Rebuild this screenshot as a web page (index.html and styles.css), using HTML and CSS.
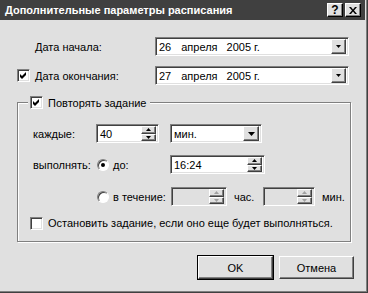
FILE: index.html
```html
<!DOCTYPE html>
<html lang="ru">
<head>
    <meta charset="UTF-8">
    <title>Дополнительные параметры расписания</title>
    <link rel="stylesheet" href="styles.css">
</head>
<body>
<div class="window">
    <div class="titlebar">
        <span class="title">Дополнительные параметры расписания</span>
        <span class="tb-btn tb-help">?</span>
        <span class="tb-btn tb-close">
            <svg width="8" height="7" viewBox="0 0 8 7"><path d="M0 0h2l2 2.4L6 0h2L5 3.5 8 7H6L4 4.6 2 7H0l3-3.5z"/></svg>
        </span>
    </div>

    <div class="dialog">
        <div class="row date-row">
            <span class="check-slot"></span>
            <span class="label">Дата начала:</span>
            <div class="field date-field">
                <span class="date-text"><span>26</span><span class="month">апреля</span><span class="year">2005 г.</span></span>
                <span class="btn drop-btn"><svg width="5" height="3" viewBox="0 0 5 3"><path d="M0 0h5L2.5 3z"/></svg></span>
            </div>
        </div>

        <div class="row date-row second">
            <span class="check-slot"><span class="checkbox checked"><svg width="7" height="7" viewBox="0 0 7 7"><path d="M0 2l2 2 4-4v3L2 7 0 5z"/></svg></span></span>
            <span class="label">Дата окончания:</span>
            <div class="field date-field">
                <span class="date-text"><span>27</span><span class="month">апреля</span><span class="year">2005 г.</span></span>
                <span class="btn drop-btn"><svg width="5" height="3" viewBox="0 0 5 3"><path d="M0 0h5L2.5 3z"/></svg></span>
            </div>
        </div>

        <fieldset class="group">
            <legend>
                <span class="checkbox checked"><svg width="7" height="7" viewBox="0 0 7 7"><path d="M0 2l2 2 4-4v3L2 7 0 5z"/></svg></span>
                <span>Повторять задание</span>
            </legend>

            <div class="grow every-row">
                <span class="glabel">каждые:</span>
                <div class="field spin spin-count">
                    <span class="value">40</span>
                    <span class="spin-btns">
                        <span class="btn"><svg width="5" height="3" viewBox="0 0 5 3"><path d="M2.5 0L5 3H0z"/></svg></span>
                        <span class="btn"><svg width="5" height="3" viewBox="0 0 5 3"><path d="M0 0h5L2.5 3z"/></svg></span>
                    </span>
                </div>
                <div class="field unit-select">
                    <span class="value">мин.</span>
                    <span class="btn drop-btn big"><svg width="7" height="4" viewBox="0 0 7 4"><path d="M0 0h7L3.5 4z"/></svg></span>
                </div>
            </div>

            <div class="grow exec-row">
                <span class="glabel wide">выполнять:</span>
                <span class="radio-slot"><span class="radio on"></span></span>
                <span class="opt until">до:</span>
                <div class="field spin spin-time">
                    <span class="value">16:24</span>
                    <span class="spin-btns">
                        <span class="btn"><svg width="5" height="3" viewBox="0 0 5 3"><path d="M2.5 0L5 3H0z"/></svg></span>
                        <span class="btn"><svg width="5" height="3" viewBox="0 0 5 3"><path d="M0 0h5L2.5 3z"/></svg></span>
                    </span>
                </div>
            </div>

            <div class="grow during-row">
                <span class="glabel wide"></span>
                <span class="radio-slot"><span class="radio"></span></span>
                <span class="opt during">в течение:</span>
                <div class="field spin disabled spin-hours">
                    <span class="value"></span>
                    <span class="spin-btns">
                        <span class="btn"><svg width="5" height="3" viewBox="0 0 5 3"><path d="M2.5 0L5 3H0z"/></svg></span>
                        <span class="btn"><svg width="5" height="3" viewBox="0 0 5 3"><path d="M0 0h5L2.5 3z"/></svg></span>
                    </span>
                </div>
                <span class="unit hours">час.</span>
                <div class="field spin disabled spin-mins">
                    <span class="value"></span>
                    <span class="spin-btns">
                        <span class="btn"><svg width="5" height="3" viewBox="0 0 5 3"><path d="M2.5 0L5 3H0z"/></svg></span>
                        <span class="btn"><svg width="5" height="3" viewBox="0 0 5 3"><path d="M0 0h5L2.5 3z"/></svg></span>
                    </span>
                </div>
                <span class="unit">мин.</span>
            </div>

            <div class="grow stop-row">
                <span class="checkbox"></span>
                <span>Остановить задание, если оно еще будет выполняться.</span>
            </div>
        </fieldset>

        <div class="buttons">
            <span class="push default">OK</span>
            <span class="push">Отмена</span>
        </div>
    </div>
</div>
</body>
</html>
```

FILE: styles.css
```css
body {
    margin: 0;
    background: #e0e0e0;
}

.window {
    width: 368px;
    height: 293px;
    box-sizing: border-box;
    background: #e0e0e0;
    border-right: 1px solid #404040;
    border-bottom: 1px solid #404040;
    box-shadow: inset -1px -1px 0 #808080;
    font-family: "Liberation Sans", Arial, sans-serif;
    font-size: 11px;
    color: #000;
    overflow: hidden;
}

/* заголовок окна */
.titlebar {
    display: flex;
    align-items: center;
    height: 20px;
    margin-right: 2px;
    background: #404040;
    padding-right: 4px;
}

.title {
    flex: 1;
    padding-left: 5px;
    color: #fff;
    font-weight: bold;
    font-size: 11px;
    white-space: nowrap;
}

.tb-btn {
    width: 16px;
    height: 14px;
    box-sizing: border-box;
    display: flex;
    align-items: center;
    justify-content: center;
    background: #e0e0e0;
    border-top: 1px solid #fff;
    border-left: 1px solid #fff;
    border-right: 1px solid #000;
    border-bottom: 1px solid #000;
    box-shadow: inset -1px -1px 0 #808080;
    font-weight: bold;
    font-size: 12px;
    line-height: 12px;
}

.tb-close {
    margin-left: 2px;
}

/* содержимое */
.dialog {
    padding: 17px 13px 0 17px;
}

.row {
    display: flex;
    align-items: center;
    height: 19px;
}

.date-row.second {
    margin-top: 10px;
}

.check-slot {
    width: 18px;
    display: flex;
    align-items: center;
}

.label {
    width: 120px;
}

/* поля ввода */
.field {
    display: flex;
    align-items: center;
    box-sizing: border-box;
    height: 19px;
    background: #fff;
    border: 1px solid;
    border-color: #808080 #fff #fff #808080;
    box-shadow: inset 1px 1px 0 #404040, inset -1px -1px 0 #e0e0e0;
    padding: 2px 2px 2px 3px;
}

.field .value,
.date-text {
    flex: 1;
    white-space: nowrap;
}

.date-field {
    width: 194px;
}

.date-text .month {
    margin-left: 10px;
}

.date-text .year {
    margin-left: 9px;
}

.btn {
    display: flex;
    align-items: center;
    justify-content: center;
    box-sizing: border-box;
    background: #e0e0e0;
    border-top: 1px solid #fff;
    border-left: 1px solid #fff;
    border-right: 1px solid #404040;
    border-bottom: 1px solid #404040;
    box-shadow: inset -1px -1px 0 #808080;
}

.btn svg {
    fill: #000;
}

.drop-btn {
    width: 15px;
    height: 15px;
}

.drop-btn.big {
    width: 16px;
}

.spin {
    padding-right: 2px;
}

.spin-btns {
    display: flex;
    flex-direction: column;
    width: 15px;
    height: 15px;
}

.spin-btns .btn {
    flex: 1;
}

.disabled {
    background: #e0e0e0;
}

.disabled .btn svg {
    fill: #a0a0a0;
}

/* флажки и переключатели */
.checkbox {
    width: 13px;
    height: 13px;
    box-sizing: border-box;
    display: inline-flex;
    align-items: center;
    justify-content: center;
    background: #fff;
    border: 1px solid;
    border-color: #808080 #fff #fff #808080;
    box-shadow: inset 1px 1px 0 #404040, inset -1px -1px 0 #e0e0e0;
}

.radio-slot {
    width: 16px;
    display: flex;
    align-items: center;
}

.radio {
    width: 12px;
    height: 12px;
    box-sizing: border-box;
    display: flex;
    align-items: center;
    justify-content: center;
    border-radius: 50%;
    background: #fff;
    border: 1px solid;
    border-color: #808080 #fff #fff #808080;
    box-shadow: inset 1px 1px 0 #404040;
}

.radio.on::after {
    content: "";
    width: 4px;
    height: 4px;
    border-radius: 50%;
    background: #000;
}

/* группа повторения */
.group {
    box-sizing: border-box;
    width: 334px;
    margin: 11px 0 0 0;
    padding: 0 0 11px 0;
    border: 1px solid #808080;
    box-shadow: 1px 1px 0 #fff, inset 1px 1px 0 #fff;
}

.group legend {
    display: flex;
    align-items: center;
    gap: 5px;
    height: 13px;
    margin-left: 10px;
    padding: 0 4px 0 2px;
    background: #e0e0e0;
}

.grow {
    display: flex;
    align-items: center;
    height: 19px;
    padding-left: 15px;
}

.every-row {
    margin-top: 15px;
}

.exec-row {
    margin-top: 12px;
}

.during-row {
    margin-top: 13px;
}

.stop-row {
    margin-top: 10px;
    height: 14px;
    padding-left: 12px;
    gap: 5px;
}

.glabel {
    width: 63px;
}

.glabel.wide {
    width: 64px;
}

.spin-count {
    width: 63px;
    margin-right: 11px;
}

.unit-select {
    width: 92px;
}

.opt.until {
    width: 57px;
}

.opt.during {
    width: 58px;
}

.spin-time {
    width: 95px;
}

.spin-hours {
    width: 56px;
}

.unit {
    margin-left: 7px;
}

.unit.hours {
    width: 29px;
}

.spin-mins {
    width: 52px;
}

/* кнопки */
.buttons {
    display: flex;
    justify-content: flex-end;
    gap: 6px;
    margin-top: 14px;
}

.push {
    width: 75px;
    height: 23px;
    box-sizing: border-box;
    display: flex;
    align-items: center;
    justify-content: center;
    background: #e0e0e0;
    border-top: 1px solid #fff;
    border-left: 1px solid #fff;
    border-right: 1px solid #404040;
    border-bottom: 1px solid #404040;
    box-shadow: inset -1px -1px 0 #808080;
}

.push.default {
    outline: 1px solid #000;
    outline-offset: 0;
}
```
